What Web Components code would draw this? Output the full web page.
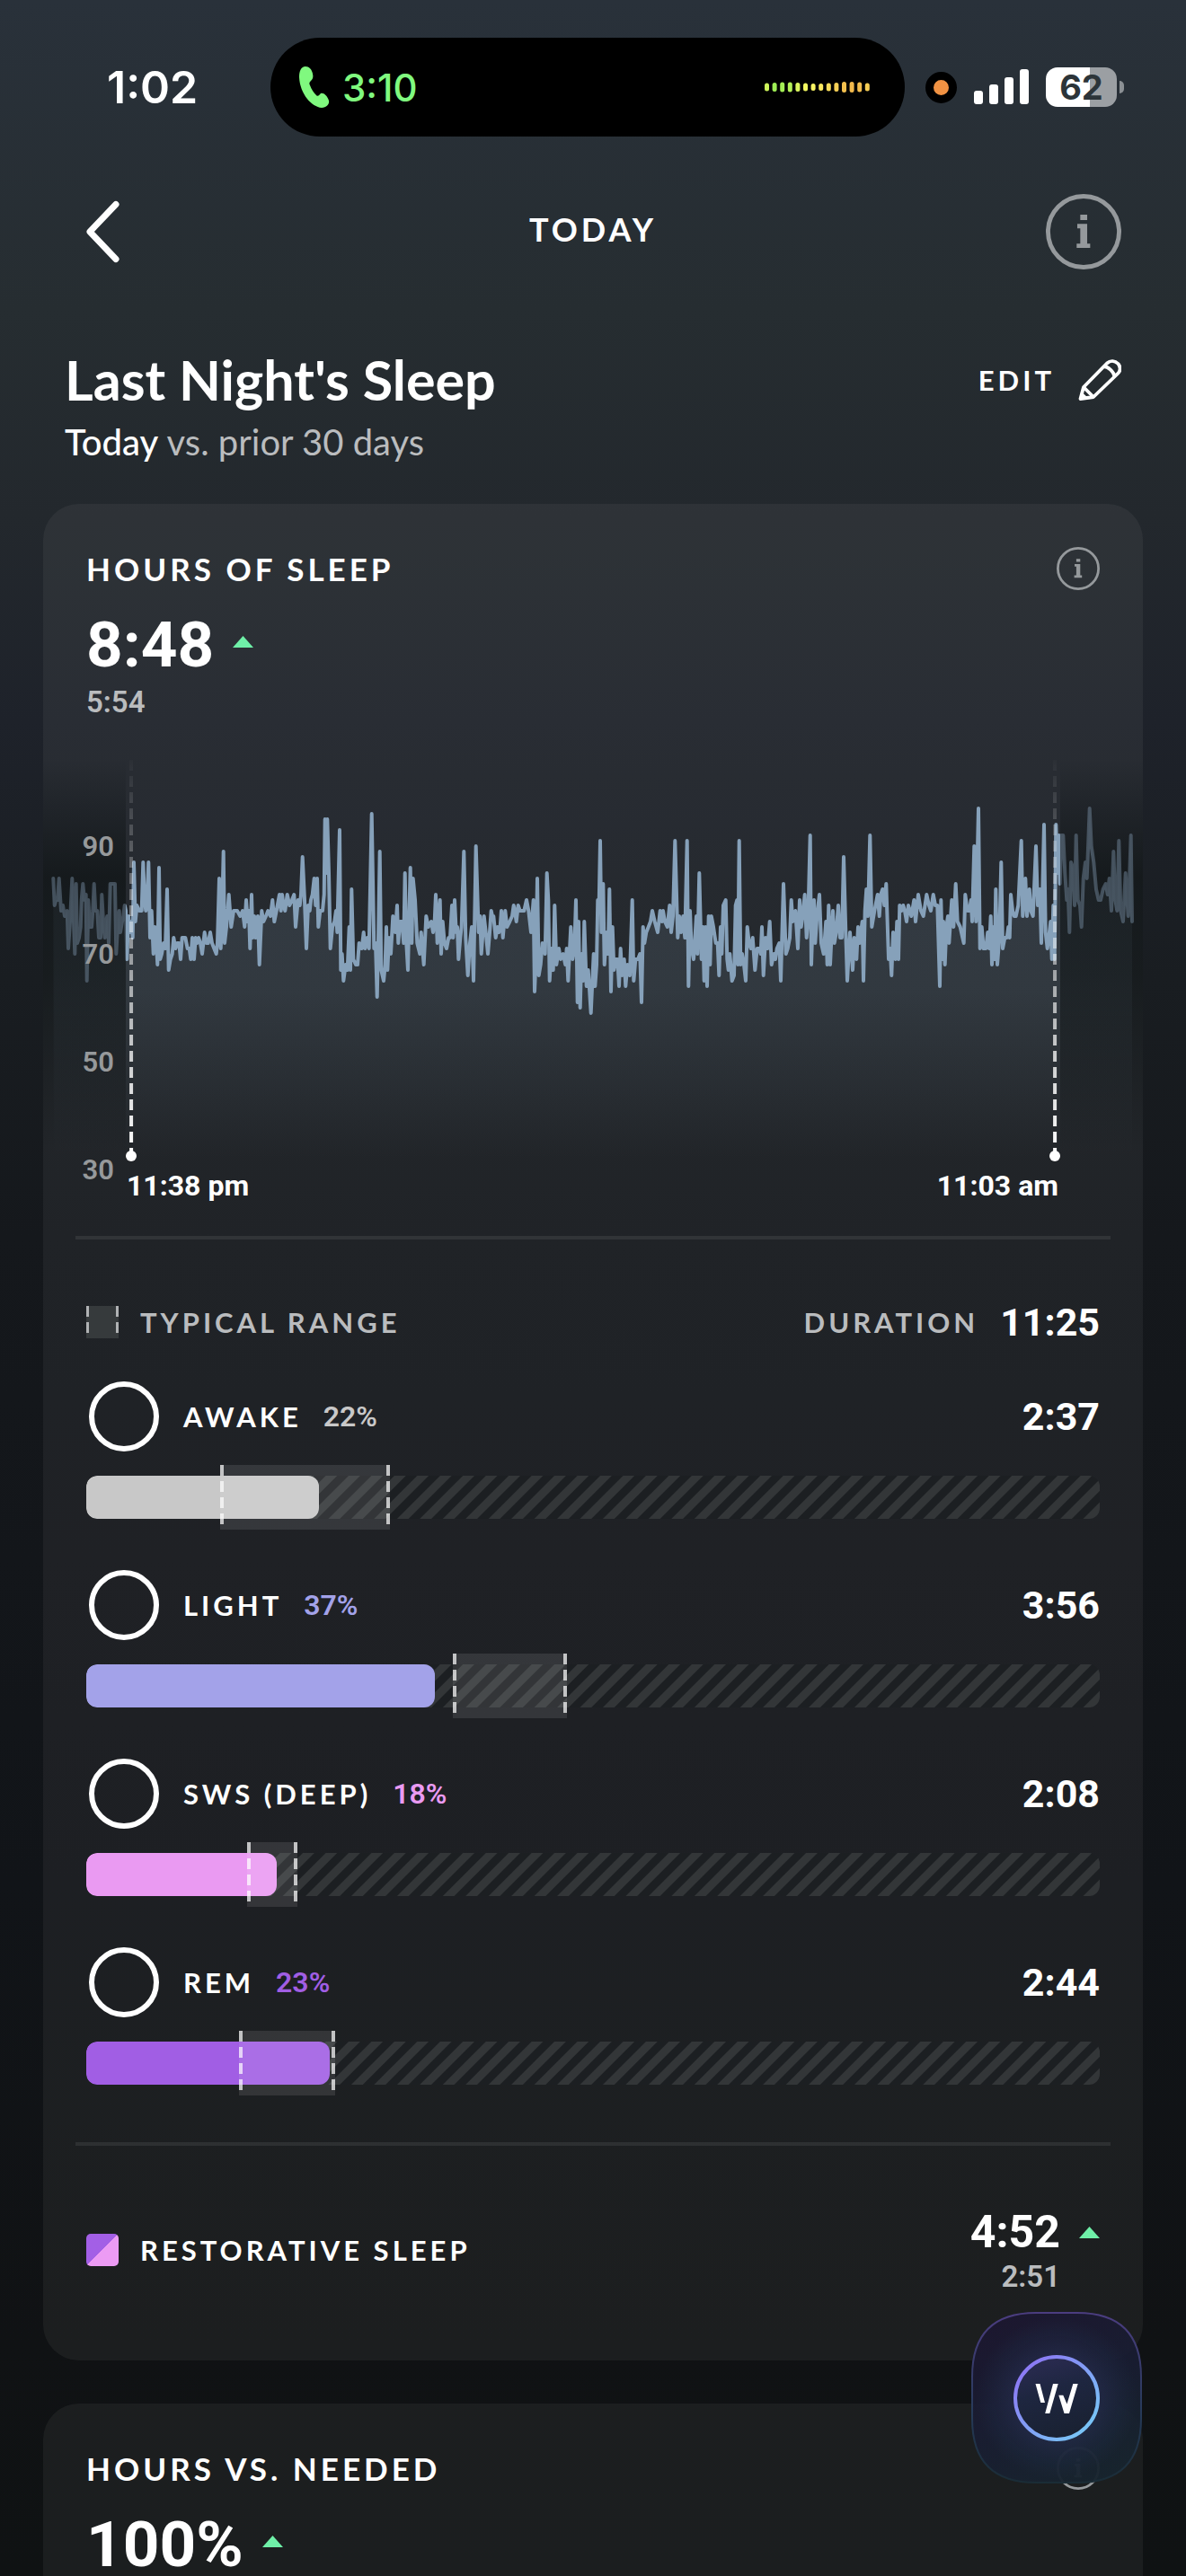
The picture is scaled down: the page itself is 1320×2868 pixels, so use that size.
<!DOCTYPE html>
<html lang="en">
<head>
<meta charset="utf-8">
<meta name="viewport" content="width=device-width, initial-scale=1">
<title>Last Night's Sleep</title>
<style>
    html {
        --text: #ffffff;
        --muted: #babcbe;
        --dim: #96999b;
        --line: rgba(255, 255, 255, 0.08);
        --label-font: Lato, "Open Sans", sans-serif;
        --number-font: Roboto, "Liberation Sans", sans-serif;
        --system-font: Inter, "Liberation Sans", sans-serif;
    }
    body {
        margin: 0;
        background: #101214;
        color: var(--text);
        font-family: var(--label-font);
    }
</style>
</head>
<body>
<sleep-app></sleep-app>

<script>
class StatusBar extends HTMLElement {
    constructor() {
        super();
        this.attachShadow({ mode: "open" });
        this.shadowRoot.innerHTML = `
            <style>
                :host {
                    display: flex;
                    align-items: center;
                    padding: 42px 69px 0 119px;
                    font-family: var(--system-font);
                    font-weight: 600;
                }
                .time { width: 98px; margin-right: 84px; font-size: 50px; line-height: 60px; }
                .island {
                    flex: 1;
                    display: flex;
                    align-items: center;
                    height: 110px;
                    box-sizing: border-box;
                    padding: 0 38px 0 32px;
                    border-radius: 55px;
                    background: #000;
                    color: #80f97f;
                    font-size: 42px;
                    font-weight: 500;
                }
                .island svg:first-child { margin-right: 14px; }
                .wave { margin-left: auto; }
                .right { display: flex; align-items: center; margin-left: 23px; }
                .mic { width: 17px; height: 17px; border: 9px solid #000; border-radius: 50%; background: #f19243; }
                .signal { margin: 0 18px 0 19px; }
                .battery {
                    width: 79px;
                    height: 44px;
                    border-radius: 13px;
                    background: linear-gradient(90deg, #fff 62%, #9b9fa3 62%);
                    color: #2c3439;
                    font-size: 38px;
                    font-weight: 700;
                    line-height: 44px;
                    text-align: center;
                }
                .nub { width: 5px; height: 14px; margin-left: 3px; border-radius: 0 5px 5px 0; background: #8b9094; }
            </style>
            <span class="time">1:02</span>
            <div class="island">
                <svg width="34" height="46" viewBox="0 0 34 46" fill="#80f97f" aria-hidden="true">
                    <path d="M7 0C11 0 14 3 15 8C16 12 15 14 13 16C11 18 11 19 12 21C14 26 16 29 19 32C21 34 22 32 24 30C27 29 31 32 33 38C34 42 30 46 25 46C14 45 1 31 0 12C0 5 2 0 7 0Z"/>
                </svg>
                <span>3:10</span>
                <svg class="wave" width="118" height="12" viewBox="0 0 118 12" aria-hidden="true"></svg>
            </div>
            <div class="right">
                <div class="mic"></div>
                <svg class="signal" width="62" height="40" viewBox="0 0 62 40" fill="#fff" aria-hidden="true">
                    <rect x="0" y="24" width="10" height="15" rx="3"/>
                    <rect x="17" y="17" width="10" height="22" rx="3"/>
                    <rect x="34" y="9" width="10" height="30" rx="3"/>
                    <rect x="51" y="0" width="10" height="39" rx="3"/>
                </svg>
                <div class="battery">62</div>
                <div class="nub"></div>
            </div>
        `;
    }

    connectedCallback() {
        this.drawWave();
    }

    drawWave() {
        const heights = [9, 10, 11, 11, 10, 9, 8, 8, 9, 10, 12, 12, 11, 9];
        const colors = ["#cdf45a", "#9fee55", "#a4ee55", "#b4f158", "#dcf65e", "#f2f860", "#faf464",
                        "#fbe960", "#f8dc5a", "#f6d056", "#f3c04e", "#f2b94c", "#f2bd4e", "#f5cd54"];
        const bars = heights.map((h, i) =>
            `<rect x="${i * 8.6}" y="${6 - h / 2}" width="5" height="${h}" rx="2.5" fill="${colors[i]}"/>`);
        this.shadowRoot.querySelector(".wave").innerHTML = bars.join("");
    }
}

class InfoButton extends HTMLElement {
    constructor() {
        super();
        this.attachShadow({ mode: "open" });
        this.shadowRoot.innerHTML = `
            <style>
                :host { display: block; --size: 48px; }
                :host([large]) { --size: 84px; }
                button { display: block; padding: 0; border: 0; background: none; color: #95999c; }
                svg { display: block; width: var(--size); height: var(--size); }
            </style>
            <button aria-label="More information">
                <svg viewBox="0 0 48 48" fill="currentColor">
                    <circle cx="24" cy="24" r="22.6" fill="none" stroke="currentColor" stroke-width="2.8"/>
                    <path d="M21.9 13.2H26.3V16.6H21.9ZM20 19H26.3V31.5H28.2V34.3H19.6V31.5H21.9V21.8H20Z"/>
                </svg>
            </button>
        `;
    }
}

class NavBar extends HTMLElement {
    constructor() {
        super();
        this.attachShadow({ mode: "open" });
        this.shadowRoot.innerHTML = `
            <style>
                :host {
                    display: grid;
                    grid-template-columns: 1fr auto 1fr;
                    align-items: center;
                    padding: 64px 72px 0;
                }
                .back { justify-self: start; padding: 0 24px; border: 0; background: none; }
                .back svg { display: block; }
                h1 { margin: 0 0 6px; font-size: 36px; line-height: 48px; font-weight: 700; letter-spacing: 4px; }
                info-button { justify-self: end; }
            </style>
            <button class="back" aria-label="Back">
                <svg width="38" height="70" viewBox="0 0 38 70" fill="none" stroke="#fff" stroke-width="7" stroke-linecap="round" stroke-linejoin="round">
                    <path d="M33 4.5L4 35L33 65.5"/>
                </svg>
            </button>
            <h1><slot></slot></h1>
            <info-button large></info-button>
        `;
    }
}

class PageTitle extends HTMLElement {
    constructor() {
        super();
        this.attachShadow({ mode: "open" });
        this.shadowRoot.innerHTML = `
            <style>
                :host { display: block; padding: 87px 72px 45px; }
                .row { display: flex; align-items: center; justify-content: space-between; }
                h2 { margin: 0; font-size: 61px; line-height: 72px; font-weight: 700; }
                p { margin: 9px 0 0; font-size: 40px; line-height: 48px; color: var(--muted); }
                strong { color: var(--text); font-weight: 500; }
                button {
                    display: flex;
                    align-items: center;
                    gap: 26px;
                    padding: 0;
                    border: 0;
                    background: none;
                    color: inherit;
                    font: 700 31px/48px var(--label-font);
                    letter-spacing: 4px;
                }
            </style>
            <div class="row">
                <h2><slot></slot></h2>
                <button>EDIT
                    <svg width="48" height="46" viewBox="0 0 48 46" fill="none" stroke="#fff" stroke-width="3.8" stroke-linejoin="round" aria-hidden="true">
                        <path d="M2.5 44L6 31L32 4.5C36 0.8 41 1.6 44.5 5C47.600 9 47 13 44 16L17 42ZM28.500 8C33 8 40 14 40.500 19.500M6 31L17 42"/>
                        <path d="M2 44.500L4 36.500L10.500 42.500Z" fill="#fff" stroke="none"/>
                    </svg>
                </button>
            </div>
            <p><strong>Today</strong> vs. prior 30 days</p>
        `;
    }
}

class TrendValue extends HTMLElement {
    constructor() {
        super();
        this.attachShadow({ mode: "open" });
        this.shadowRoot.innerHTML = `
            <style>
                :host {
                    display: grid;
                    grid-template-columns: auto 23px;
                    justify-content: start;
                    align-items: center;
                    column-gap: 21px;
                    row-gap: 10px;
                    font-family: var(--number-font);
                    font-weight: 700;
                }
                .value { font-size: 71px; line-height: 72px; }
                .prior { font-size: 33px; line-height: 36px; font-weight: 600; color: var(--muted); }
                svg { display: block; margin-bottom: 8px; }
                :host([small]) { row-gap: 4px; justify-items: end; }
                :host([small]) .value { font-size: 50px; line-height: 56px; }
                :host([small]) svg { margin: 0; }
            </style>
            <span class="value"><slot></slot></span>
            <svg width="23" height="13" viewBox="0 0 23 13" fill="#6ff0a8" role="img" aria-label="Up"><path d="M11.5 0L23 13H0Z"/></svg>
            <span class="prior"><slot name="prior"></slot></span>
        `;
    }
}

class MetricCard extends HTMLElement {
    constructor() {
        super();
        this.attachShadow({ mode: "open" });
        this.shadowRoot.innerHTML = `
            <style>
                :host {
                    display: block;
                    margin: 0 48px 48px;
                    padding: 48px;
                    border-radius: 40px;
                    background: rgba(255, 255, 255, 0.052);
                }
                header { display: flex; align-items: center; justify-content: space-between; margin-bottom: 25px; }
                h3 { margin: 0; font-size: 35px; line-height: 48px; font-weight: 700; letter-spacing: 4px; }
            </style>
            <header>
                <h3><slot name="title"></slot></h3>
                <info-button></info-button>
            </header>
            <slot></slot>
        `;
    }
}

// Heart rate samples as x, bpm pairs. x counts thirds of a pixel from the left of the trace.
const HEART_RATE = [
    58,84,62,79,67,80,72,80,77,84,84,78,90,79,96,77,104,78,108,71,114,76,121,84,126,76,130,70,134,83,138,72,
    144,73,149,75,152,80,157,83,162,80,167,81,170,65,175,80,180,75,186,75,190,78,194,83,199,78,205,78,210,73,
    216,73,220,81,225,76,230,73,234,76,238,77,243,72,248,83,254,83,258,83,264,83,268,70,274,76,278,78,282,74,
    288,76,292,77,296,79,300,78,304,69,309,77,314,74,319,76,323,73,327,87,332,76,337,79,345,78,353,78,358,87,
    363,80,367,78,371,80,376,87,381,73,386,78,392,70,397,75,402,72,406,68,411,86,415,69,420,70,426,72,432,71,
    438,82,443,67,449,69,455,70,460,73,466,71,472,72,478,72,483,69,488,73,499,73,506,71,512,71,517,69,522,73,
    528,69,533,73,538,72,543,73,549,72,555,70,563,74,569,72,575,72,582,74,588,72,595,71,602,70,606,72,612,84,
    617,71,621,76,626,89,630,72,636,75,644,81,652,75,660,78,672,78,682,77,690,78,697,75,702,80,707,76,711,78,
    715,71,720,81,724,73,729,77,734,73,741,77,746,68,754,78,760,76,768,77,775,78,783,77,790,80,796,76,803,78,
    813,81,818,78,822,81,827,79,832,78,839,81,847,79,855,80,862,81,867,75,875,80,881,79,885,81,890,88,897,80,
    903,71,909,79,914,78,918,80,923,81,929,84,934,79,939,84,943,75,949,78,957,78,962,81,965,95,969,85,973,95,
    978,85,983,71,990,75,997,76,1002,78,1006,74,1014,93,1018,67,1022,70,1027,65,1034,68,1040,67,1046,75,
    1050,67,1054,82,1060,69,1068,68,1074,68,1079,72,1088,71,1094,74,1099,71,1106,73,1112,71,1121,96,1129,71,
    1134,72,1139,62,1143,72,1148,89,1153,67,1161,65,1166,68,1170,75,1174,67,1179,73,1185,70,1192,77,1200,74,
    1206,79,1210,72,1215,76,1222,76,1228,72,1232,85,1237,72,1242,67,1250,86,1255,72,1259,84,1266,80,1273,72,
    1282,70,1286,74,1295,68,1303,77,1310,75,1320,76,1326,74,1331,76,1335,81,1340,72,1344,77,1349,80,1353,70,
    1358,76,1364,72,1371,71,1378,73,1383,73,1389,79,1393,73,1398,80,1403,74,1407,75,1411,69,1417,73,1421,75,
    1429,89,1435,73,1442,66,1449,72,1455,75,1461,65,1469,90,1478,74,1483,77,1487,70,1496,77,1502,74,1509,70,
    1515,74,1520,78,1524,77,1528,77,1535,73,1541,75,1546,74,1550,75,1554,78,1559,73,1567,78,1573,75,1582,76,
    1590,77,1595,79,1599,78,1604,76,1610,79,1616,78,1624,78,1630,78,1638,80,1645,78,1653,74,1661,80,1665,63,
    1670,70,1674,84,1679,66,1685,68,1691,72,1700,70,1706,85,1711,80,1715,65,1721,71,1727,67,1732,79,1738,68,
    1746,71,1752,69,1760,70,1768,68,1772,71,1777,65,1786,75,1792,69,1798,71,1803,80,1808,61,1812,76,1817,60,
    1822,70,1827,65,1831,76,1838,64,1844,67,1853,59,1862,70,1867,64,1872,68,1876,80,1880,79,1884,91,1888,74,
    1894,83,1898,68,1905,74,1910,70,1915,82,1920,63,1925,75,1930,67,1936,69,1942,69,1947,64,1952,71,1957,66,
    1964,69,1969,64,1975,68,1983,66,1991,80,1996,65,2002,69,2010,69,2017,70,2022,61,2027,75,2032,72,2038,74,
    2045,75,2052,76,2058,78,2066,76,2076,74,2084,78,2090,76,2094,78,2100,76,2108,75,2116,79,2121,74,2127,77,
    2134,91,2143,73,2148,77,2154,74,2161,77,2167,73,2174,91,2179,64,2184,78,2189,71,2196,69,2205,77,2209,70,
    2215,85,2222,69,2227,75,2231,65,2236,75,2241,64,2246,77,2251,68,2255,77,2262,75,2270,72,2276,72,2281,66,
    2286,75,2290,70,2295,79,2303,80,2308,69,2312,67,2317,70,2324,65,2331,66,2336,79,2341,80,2344,68,2348,91,
    2353,68,2358,70,2364,68,2370,65,2375,75,2381,72,2387,71,2393,73,2401,67,2408,71,2416,71,2420,70,2424,75,
    2429,66,2436,73,2443,71,2450,76,2456,68,2464,70,2469,69,2474,71,2482,72,2487,65,2496,83,2504,70,2510,71,
    2517,73,2522,80,2527,76,2531,77,2536,78,2544,71,2550,80,2555,75,2560,77,2567,81,2573,73,2578,76,2585,92,
    2589,68,2594,77,2598,80,2602,72,2608,77,2616,81,2622,72,2630,70,2638,76,2642,68,2647,79,2652,68,2657,74,
    2661,78,2666,72,2672,74,2679,79,2685,73,2691,73,2697,88,2704,74,2709,65,2718,74,2727,67,2732,73,2740,69,
    2745,75,2750,72,2759,76,2763,65,2768,78,2773,82,2778,77,2785,92,2791,75,2800,78,2810,81,2816,77,2821,81,
    2827,82,2833,79,2839,83,2847,69,2852,71,2857,66,2862,74,2870,69,2875,76,2880,69,2884,79,2890,78,2896,79,
    2901,78,2907,76,2913,79,2923,77,2932,80,2937,76,2946,81,2955,78,2963,77,2974,81,2982,79,2988,78,2996,81,
    3003,79,3010,79,3018,64,3022,80,3027,69,3030,76,3035,68,3040,75,3045,77,3049,72,3058,80,3064,75,3071,83,
    3077,76,3086,75,3094,73,3098,72,3103,81,3110,78,3117,78,3122,80,3126,76,3133,90,3139,76,3147,97,3152,71,
    3158,75,3164,71,3172,71,3178,74,3183,71,3188,77,3192,68,3197,75,3201,69,3205,82,3210,68,3217,73,3223,87,
    3228,71,3235,73,3242,73,3247,75,3251,73,3255,81,3261,78,3266,77,3272,77,3280,79,3290,91,3295,77,3304,84,
    3309,77,3317,82,3322,78,3329,77,3339,90,3345,79,3352,82,3357,72,3366,94,3371,74,3377,71,3382,73,3388,76,
    3392,69,3397,79,3401,69,3406,94,3411,85,3415,92,3419,83,3424,92,3430,92,3436,85,3442,80,3446,82,3451,74,
    3456,87,3463,86,3468,79,3473,92,3479,80,3486,79,3491,75,3497,84,3504,87,3509,84,3518,97,3524,90,3532,87,
    3540,82,3548,80,3555,80,3563,82,3572,83,3578,81,3584,84,3591,78,3598,89,3604,80,3610,78,3616,91,3622,78,
    3630,76,3638,85,3647,77,3656,92,3660,76
];

class HeartChart extends HTMLElement {
    constructor() {
        super();
        this.attachShadow({ mode: "open" });
        this.shadowRoot.innerHTML = `
            <style>
                :host { display: block; margin: 40px -48px 0; }
                svg { display: block; width: 100%; height: auto; }
                text { font-family: var(--number-font); }
                .axis { fill: var(--dim); font-size: 31px; font-weight: 600; text-anchor: end; }
                .time { fill: var(--text); font-size: 32px; font-weight: 700; }
            </style>
            <svg viewBox="0 0 1224 536" role="img" aria-label="Heart rate from 11:38 pm to 11:03 am">
                <defs>
                    <linearGradient id="area" gradientUnits="userSpaceOnUse" x1="0" y1="80" x2="0" y2="450">
                        <stop offset="0" stop-color="#86a1ba" stop-opacity="0.14"/>
                        <stop offset="0.5" stop-color="#86a1ba" stop-opacity="0.14"/>
                        <stop offset="1" stop-color="#86a1ba" stop-opacity="0"/>
                    </linearGradient>
                    <linearGradient id="shade" x1="0" y1="0" x2="0" y2="1">
                        <stop offset="0" stop-color="#0b1011" stop-opacity="0"/>
                        <stop offset="0.3" stop-color="#0b1011" stop-opacity="0.62"/>
                        <stop offset="0.55" stop-color="#0b1011" stop-opacity="0.5"/>
                        <stop offset="1" stop-color="#0b1011" stop-opacity="0"/>
                    </linearGradient>
                    <linearGradient id="fade" gradientUnits="userSpaceOnUse" x1="0" y1="0" x2="0" y2="445">
                        <stop offset="0" stop-color="#fff" stop-opacity="0"/>
                        <stop offset="0.3" stop-color="#fff" stop-opacity="0.3"/>
                        <stop offset="1" stop-color="#fff"/>
                    </linearGradient>
                    <clipPath id="night"><rect x="92" y="0" width="1040" height="536"/></clipPath>
                    <clipPath id="day"><path d="M0 0H92V536H0ZM1132 0H1224V536H1132Z"/></clipPath>
                </defs>
                <path d="M0 6H92V440H0ZM1132 6H1224V440H1132Z" fill="url(#shade)"/>
                <g class="plot"></g>
                <g class="labels"></g>
                <g stroke="url(#fade)" stroke-width="4" stroke-dasharray="12 6">
                    <path d="M98 6L98.1 444M1126 6L1126.1 444"/>
                </g>
                <circle cx="98" cy="447" r="6" fill="#fff"/>
                <circle cx="1126" cy="447" r="6" fill="#fff"/>
                <text class="time" x="93" y="491">11:38 pm</text>
                <text class="time" x="1130" y="491" text-anchor="end">11:03 am</text>
            </svg>
        `;
    }

    connectedCallback() {
        this.drawTrace();
        this.drawAxis();
    }

    static bpmToY(bpm) {
        return 102 + (90 - bpm) * 6;
    }

    drawTrace() {
        let points = "";
        for (let i = 0; i < HEART_RATE.length; i += 2) {
            const x = (HEART_RATE[i] / 3 - 8).toFixed(1);
            points += `${i ? "L" : "M"}${x} ${HeartChart.bpmToY(HEART_RATE[i + 1])}`;
        }
        const area = `${points}V450H12Z`;
        const stroke = `fill="none" stroke-width="4" stroke-linejoin="round" stroke-linecap="round"`;
        this.shadowRoot.querySelector(".plot").innerHTML = `
            <g clip-path="url(#day)">
                <path d="${area}" fill="url(#area)" opacity="0.4"/>
                <path d="${points}" ${stroke} stroke="#86a1ba" stroke-opacity="0.4"/>
            </g>
            <g clip-path="url(#night)">
                <path d="${area}" fill="url(#area)"/>
                <path d="${points}" ${stroke} stroke="#86a1ba"/>
            </g>
        `;
    }

    drawAxis() {
        this.shadowRoot.querySelector(".labels").innerHTML = [90, 70, 50, 30].map(bpm =>
            `<text class="axis" x="79" y="${HeartChart.bpmToY(bpm) + 11}">${bpm}</text>`).join("");
    }
}

// <stage-row name percent time color fill from to>, the last three in percent of the bar
class StageRow extends HTMLElement {
    constructor() {
        super();
        this.attachShadow({ mode: "open" });
    }

    connectedCallback() {
        const get = name => this.getAttribute(name);
        this.shadowRoot.innerHTML = `
            <style>
                :host { display: block; }
                .head { display: flex; align-items: center; }
                input {
                    appearance: none;
                    flex: none;
                    width: 78px;
                    height: 78px;
                    margin: 3px;
                    border: 6px solid #fff;
                    border-radius: 50%;
                }
                label { margin-left: 24px; font-size: 31px; line-height: 36px; font-weight: 700; letter-spacing: 4px; }
                .percent { margin-left: 24px; color: ${get("color")}; font: 600 32px/36px var(--number-font); }
                .time { margin-left: auto; font: 700 43px/48px var(--number-font); }
                .bar { position: relative; margin-top: 12px; padding: 12px 0; }
                .track {
                    height: 48px;
                    border-radius: 12px;
                    overflow: hidden;
                    background: repeating-linear-gradient(135deg, #1c1f22 0 8px, #333638 9px 17px, #1c1f22 18px);
                }
                .fill { width: ${get("fill")}%; height: 100%; border-radius: 12px; background: ${get("color")}; }
                .range {
                    position: absolute;
                    top: 0;
                    bottom: 0;
                    left: ${get("from")}%;
                    width: ${get("to") - get("from")}%;
                    --dash: repeating-linear-gradient(180deg, rgba(255, 255, 255, 0.7) 0 12px, transparent 12px 18px);
                    background:
                        var(--dash) left / 4px 100% no-repeat,
                        var(--dash) right / 4px 100% no-repeat,
                        rgba(255, 255, 255, 0.1);
                }
            </style>
            <div class="head">
                <input type="radio" id="stage">
                <label for="stage">${get("name")}</label>
                <span class="percent">${get("percent")}</span>
                <span class="time">${get("time")}</span>
            </div>
            <div class="bar">
                <div class="track"><div class="fill"></div></div>
                <div class="range"></div>
            </div>
        `;
    }
}

class SleepStages extends HTMLElement {
    constructor() {
        super();
        this.attachShadow({ mode: "open" });
        this.shadowRoot.innerHTML = `
            <style>
                :host { display: block; }
                hr { height: 4px; margin: 0 -12px; border: 0; background: var(--line); }
                .legend, .restorative { display: flex; align-items: center; }
                .legend { margin: 68px 0 39px; color: var(--muted); }
                .name { font-size: 31px; line-height: 36px; font-weight: 700; letter-spacing: 4px; }
                .swatch { flex: none; width: 36px; height: 36px; margin-right: 24px; }
                .range {
                    --dash: repeating-linear-gradient(180deg, #b0b2b4 0 12px, transparent 12px 18px);
                    background:
                        var(--dash) left / 3px 100% no-repeat,
                        var(--dash) right / 3px 100% no-repeat,
                        #363a3c;
                }
                .total { margin-left: auto; }
                .duration { margin-left: 24px; color: var(--text); font: 700 43px/48px var(--number-font); }
                .rows { display: grid; gap: 42px; margin-bottom: 52px; }
                .restorative { padding: 68px 0 27px; }
                .split { border-radius: 5px; background: linear-gradient(135deg, #a35fe6 50%, #ec9bf4 50%); }
                trend-value { margin-left: auto; }
            </style>
            <hr>
            <div class="legend">
                <span class="swatch range"></span>
                <span class="name">TYPICAL RANGE</span>
                <span class="name total">DURATION</span>
                <span class="duration">11:25</span>
            </div>
            <div class="rows">
                <stage-row name="AWAKE" percent="22%" time="2:37" color="#c8c8c8" fill="23" from="13.2" to="30"></stage-row>
                <stage-row name="LIGHT" percent="37%" time="3:56" color="#a3a2e9" fill="34.4" from="36.2" to="47.4"></stage-row>
                <stage-row name="SWS (DEEP)" percent="18%" time="2:08" color="#ea9af2" fill="18.8" from="15.9" to="20.8"></stage-row>
                <stage-row name="REM" percent="23%" time="2:44" color="#a15ee4" fill="24" from="15.1" to="24.6"></stage-row>
            </div>
            <hr>
            <div class="restorative">
                <span class="swatch split"></span>
                <span class="name">RESTORATIVE SLEEP</span>
                <trend-value small>4:52<span slot="prior">2:51</span></trend-value>
            </div>
        `;
    }
}

class CoachButton extends HTMLElement {
    constructor() {
        super();
        this.attachShadow({ mode: "open" });
        this.shadowRoot.innerHTML = `
            <style>
                :host { display: block; position: fixed; right: 49px; bottom: 103px; }
                button { display: block; padding: 0; border: 0; background: none; }
                svg { display: block; }
            </style>
            <button aria-label="Open coach">
                <svg width="190" height="191" viewBox="0 0 190 191" fill="none">
                    <defs>
                        <linearGradient id="base" x1="0.2" y1="0" x2="0.7" y2="1">
                            <stop offset="0" stop-color="#1c1730"/>
                            <stop offset="0.5" stop-color="#191d32"/>
                            <stop offset="1" stop-color="#17242e"/>
                        </linearGradient>
                        <radialGradient id="glow">
                            <stop offset="0.4" stop-color="#2b3158" stop-opacity="0.65"/>
                            <stop offset="1" stop-color="#22324c" stop-opacity="0"/>
                        </radialGradient>
                        <linearGradient id="edge" x1="0" y1="0" x2="0" y2="1">
                            <stop offset="0" stop-color="#4b3d80"/>
                            <stop offset="0.6" stop-color="#263a58"/>
                            <stop offset="1" stop-color="#1a2c36"/>
                        </linearGradient>
                        <linearGradient id="ring" x1="0.1" y1="0.2" x2="0.8" y2="0.9">
                            <stop offset="0" stop-color="#8b7bf4"/>
                            <stop offset="1" stop-color="#79c2f6"/>
                        </linearGradient>
                        <linearGradient id="disc" x1="0.3" y1="0" x2="0.6" y2="1">
                            <stop offset="0" stop-color="#2b2b52"/>
                            <stop offset="0.4" stop-color="#1e2640"/>
                            <stop offset="1" stop-color="#192131"/>
                        </linearGradient>
                    </defs>
                    <path d="M72 1H118C165 1 189 25 189 72V119C189 166 165 190 118 190H72C25 190 1 166 1 119V72C1 25 25 1 72 1Z" fill="url(#base)" fill-opacity="0.96" stroke="url(#edge)" stroke-width="2"/>
                    <circle cx="95" cy="96" r="90" fill="url(#glow)"/>
                    <circle cx="95" cy="96" r="46" fill="url(#disc)" stroke="url(#ring)" stroke-width="4"/>
                    <path d="M71.5 80H76.5L82 101H77.3ZM91 80H96.7L87.3 113H82.2ZM97.3 92.7H102.3L106.5 102.5L113.3 80H118.7L109 113H103.5Z" fill="#fff"/>
                </svg>
            </button>
        `;
    }
}

class SleepApp extends HTMLElement {
    constructor() {
        super();
        this.attachShadow({ mode: "open" });
        this.shadowRoot.innerHTML = `
            <style>
                :host {
                    display: block;
                    height: 100vh;
                    overflow: hidden auto;
                    scrollbar-width: none;
                    background: linear-gradient(180deg, #29313a, #262d31 12%, #23282d 20%, #1e222a 28%, #191d21 38%, #15181c 48%, #111418 73%, #101214 91%, #0f1213);
                }
            </style>
            <status-bar></status-bar>
            <nav-bar>TODAY</nav-bar>
            <main>
                <page-title>Last Night's Sleep</page-title>
                <metric-card>
                    <span slot="title">HOURS OF SLEEP</span>
                    <trend-value>8:48<span slot="prior">5:54</span></trend-value>
                    <heart-chart></heart-chart>
                    <sleep-stages></sleep-stages>
                </metric-card>
                <metric-card>
                    <span slot="title">HOURS VS. NEEDED</span>
                    <trend-value>100%</trend-value>
                </metric-card>
            </main>
            <coach-button></coach-button>
        `;
    }
}

customElements.define("status-bar", StatusBar);
customElements.define("info-button", InfoButton);
customElements.define("nav-bar", NavBar);
customElements.define("page-title", PageTitle);
customElements.define("trend-value", TrendValue);
customElements.define("metric-card", MetricCard);
customElements.define("heart-chart", HeartChart);
customElements.define("stage-row", StageRow);
customElements.define("sleep-stages", SleepStages);
customElements.define("coach-button", CoachButton);
customElements.define("sleep-app", SleepApp);
</script>
</body>
</html>
